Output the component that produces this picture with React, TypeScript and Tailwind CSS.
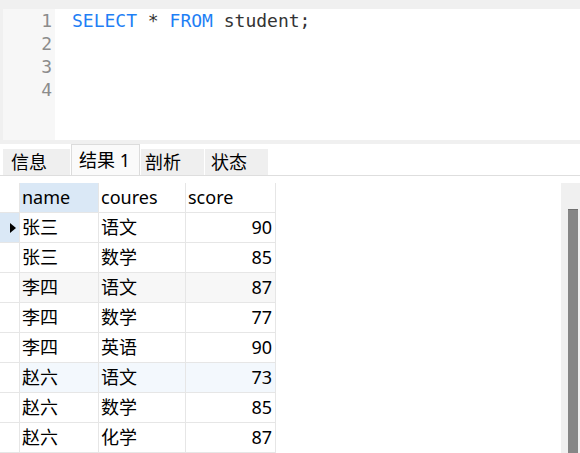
import React from 'react';

const tabs = [
  { label: '信息', w: 'w-[67px]', pl: 'pl-[8px]', active: false },
  { label: '结果 1', w: 'w-[69px]', pl: 'pl-[7px]', active: true },
  { label: '剖析', w: 'w-[63px]', pl: 'pl-[4px]', active: false },
  { label: '状态', w: 'w-[63px]', pl: 'pl-[6px]', active: false },
];

const rows = [
  { name: '张三', course: '语文', score: 90, bg: '', current: true },
  { name: '张三', course: '数学', score: 85, bg: '' },
  { name: '李四', course: '语文', score: 87, bg: 'bg-[#f7f7f7]' },
  { name: '李四', course: '数学', score: 77, bg: '' },
  { name: '李四', course: '英语', score: 90, bg: '' },
  { name: '赵六', course: '语文', score: 73, bg: 'bg-[#f3f8fd]' },
  { name: '赵六', course: '数学', score: 85, bg: '' },
  { name: '赵六', course: '化学', score: 87, bg: '' },
];

const uiFont = "font-['Noto_Sans','Noto_Sans_CJK_SC',sans-serif]";

export default function App() {
  return (
    <div className="w-[580px] h-[453px] bg-[#f0f0f0] overflow-hidden flex flex-col">
      {/* SQL editor */}
      <div className="mt-[9px] ml-[3px] h-[132px] flex bg-white font-['DejaVu_Sans_Mono',monospace] text-[18px] leading-[23px]">
        <div className="w-[52px] bg-[#f7f7f7] text-right pr-[3px] text-[#8c8c8c]">
          <div>1</div>
          <div>2</div>
          <div>3</div>
          <div>4</div>
        </div>
        <div className="flex-1 pl-[17px] whitespace-pre text-[#333]">
          <span className="text-[#1f7ff5]">SELECT</span> * <span className="text-[#1f7ff5]">FROM</span> student;
        </div>
      </div>

      {/* Tabs */}
      <div className={`mt-[4px] h-[31px] bg-white flex items-end pl-[3px] border-b border-[#dedede] box-content ${uiFont} text-[18px] text-black`}>
        {tabs.map((t) => (
          <div
            key={t.label}
            className={`${t.w} ${t.pl} flex items-center mr-px ${
              t.active
                ? 'h-[31px] bg-[#fafafa] border border-b-0 border-[#dcdcdc]'
                : 'h-[26px] bg-[#efefef]'
            }`}
          >
            {t.label}
          </div>
        ))}
      </div>

      {/* Result grid */}
      <div className={`flex-1 bg-white flex pt-[7px] ${uiFont} text-[18px] text-black`}>
        <div className="flex-1">
          <div className="flex h-[30px] border-b border-[#e6e6e6] w-[276px]">
            <div className="w-[20px] border-r border-[#e6e6e6]" />
            <div className="w-[79px] bg-[#dae8f6] border-r border-[#e6e6e6] pl-[2px] flex items-center">name</div>
            <div className="w-[87px] border-r border-[#e6e6e6] pl-[2px] flex items-center">coures</div>
            <div className="w-[90px] border-r border-[#e6e6e6] pl-[2px] flex items-center">score</div>
          </div>
          {rows.map((r, i) => (
            <div key={i} className="flex h-[30px] border-b border-[#e6e6e6] w-[276px]">
              <div
                className={`w-[20px] border-r border-[#e6e6e6] flex items-center pl-[10px] ${
                  r.current ? 'bg-[#dae8f6]' : ''
                }`}
              >
                {r.current && (
                  <svg width="6" height="10" viewBox="0 0 6 10">
                    <path d="M0 0 L6 5 L0 10 Z" fill="#000" />
                  </svg>
                )}
              </div>
              <div className={`w-[79px] border-r border-[#e6e6e6] pl-[2px] flex items-center ${r.bg}`}>{r.name}</div>
              <div className={`w-[87px] border-r border-[#e6e6e6] pl-[2px] flex items-center ${r.bg}`}>{r.course}</div>
              <div className={`w-[90px] border-r border-[#e6e6e6] pr-[3px] flex items-center justify-end ${r.bg}`}>{r.score}</div>
            </div>
          ))}
        </div>
        {/* vertical scrollbar */}
        <div className="w-[19px] bg-[#f0f0f0] pl-[7px] pr-[2px] pt-[26px]">
          <div className="h-full bg-[#868686] border-t border-[#707070]" />
        </div>
      </div>
    </div>
  );
}
